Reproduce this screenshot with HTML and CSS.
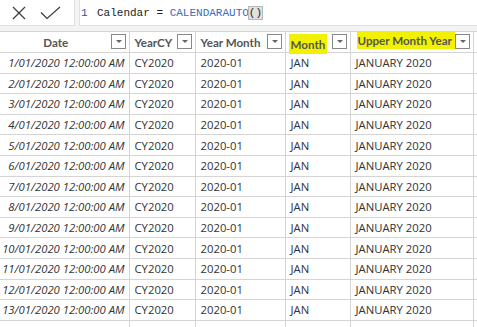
FILE: index.html
```html
<!DOCTYPE html>
<html>
<head>
<meta charset="utf-8">
<link rel="stylesheet" href="styles.css">
</head>
<body>
<div class="bar">
  <div class="actions">
    <svg class="ico-x" width="14" height="14" viewBox="0 0 14 14"><path d="M1 1 L13 13 M13 1 L1 13" stroke="#3a3a3a" stroke-width="1.2" fill="none"/></svg>
    <svg class="ico-check" width="21" height="14" viewBox="0 0 21 14"><path d="M1 6.5 L7 12.5 L20 1" stroke="#3a3a3a" stroke-width="1.2" fill="none"/></svg>
  </div>
  <div class="formula"><span class="ln">1</span><span class="code">Calendar = <span class="fn">CALENDARAUTO</span><span class="paren">()</span></span></div>
</div>
<div class="gap"></div>
<table class="grid">
  <colgroup>
    <col class="c1"><col class="c2"><col class="c3"><col class="c4"><col class="c5"><col class="c6">
  </colgroup>
  <thead>
    <tr>
      <th class="center"><span>Date</span><span class="dd"></span></th>
      <th><span>YearCY</span><span class="dd"></span></th>
      <th><span>Year Month</span><span class="dd"></span></th>
      <th><span class="hl hl-month">Month</span><span class="dd"></span></th>
      <th><span class="hl hl-upper">Upper Month Year</span><span class="dd"></span></th>
      <th></th>
    </tr>
  </thead>
  <tbody id="rows"></tbody>
</table>
<script>
  var tb = document.getElementById('rows');
  var html = '';
  for (var i = 1; i <= 13; i++) {
    html += '<tr><td class="date">' + i + '/01/2020 12:00:00 AM</td><td>CY2020</td><td>2020-01</td><td>JAN</td><td>JANUARY 2020</td><td></td></tr>';
  }
  html += '<tr><td></td><td></td><td></td><td></td><td></td><td></td></tr>';
  tb.innerHTML = html;
</script>
</body>
</html>
```
FILE: styles.css
```css
html, body { margin: 0; padding: 0; background: #fff; overflow: hidden; }
body { width: 477px; height: 327px; font-family: "Open Sans", "Noto Sans", sans-serif; }

.bar { display: flex; height: 26px; background: #f3f3f3; gap: 4px; }
.actions {
  width: 75px; box-sizing: border-box; background: #fff;
  border: 1px solid #e1e1e1; border-left: none; border-top: none;
  display: flex; align-items: center; padding-left: 12px; gap: 14px;
}
.ico-x { margin-top: 1px; }
.formula {
  flex: 1; background: #fff; border: 1px solid #e1e1e1; border-top: none; border-right: none;
  display: flex; align-items: center; padding-left: 1px;
  font-family: "Liberation Mono", "DejaVu Sans Mono", monospace; font-size: 11px; color: #222;
}
.ln { color: #2b4fa0; width: 16px; }
.code { white-space: pre; }
.fn { color: #3a6cc4; }
.paren { background: #e0e0e0; outline: 1px solid #b8b8b8; }

.gap { height: 5px; background: #f3f3f3; }

.grid { border-collapse: collapse; table-layout: fixed; width: 490px; font-size: 11.3px; color: #333; }
.c1 { width: 129px; } .c2 { width: 66px; } .c3 { width: 90px; } .c4 { width: 65px; } .c5 { width: 123px; } .c6 { width: 17px; }

.grid th {
  position: relative; height: 20px; padding: 0 0 0 5px; text-align: left;
  font-family: "Lato", "Open Sans", sans-serif; font-weight: 700; color: #555; font-size: 11.6px;
  border-top: 1px solid #d4d4d4; border-bottom: 1px solid #d4d4d4; border-right: 1px solid #d4d4d4;
  white-space: nowrap; background: #fff;
}
.grid th.center { text-align: center; padding-right: 22px; }
.grid th span { position: relative; z-index: 1; }
.dd {
  position: absolute !important; right: 3px; top: 2px; width: 13px; height: 13px;
  border: 1px solid #888; background: #fff; box-sizing: content-box;
}
.dd::after {
  content: ""; position: absolute; left: 4px; top: 5px;
  border-left: 3px solid transparent; border-right: 3px solid transparent; border-top: 3px solid #666;
}
.hl { background: #f2f200; }
.hl-month { padding: 4px 2px 3px 2px; margin-left: -2px; top: 2px; }
.hl-upper { padding: 3px 3px 2px 1px; margin-left: 1px; top: -2px; }

.grid td {
  height: 19.6px; padding: 0 0 0 5px; border-bottom: 1px solid #d4d4d4; border-right: 1px solid #d4d4d4;
  white-space: nowrap; overflow: hidden;
}
.grid td.date { text-align: right; padding: 0 4px 0 0; font-style: italic; }
```
